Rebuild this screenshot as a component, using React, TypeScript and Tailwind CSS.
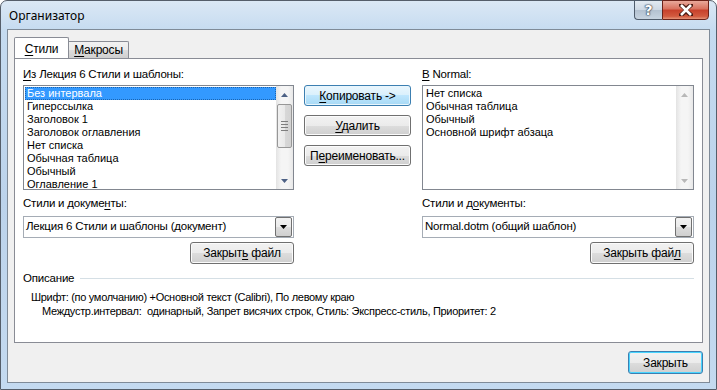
import React from "react";

const U = ({ children }: { children: React.ReactNode }) => (
  <span className="underline underline-offset-[2px] decoration-1">{children}</span>
);

const ui = "font-['Liberation_Sans',sans-serif] text-[11.5px] tracking-[-0.2px]";

function Btn({
  children,
  w,
  h = "h-[22px]",
  primary = false,
  hot = false,
}: {
  children: React.ReactNode;
  w: string;
  h?: string;
  primary?: boolean;
  hot?: boolean;
}) {
  const base = `${w} ${h} flex items-center justify-center rounded-[3px] border text-black leading-none text-[12px]`;
  if (hot)
    return (
      <div
        className={`${base} border-[#3c7fb1] bg-[linear-gradient(to_bottom,#eaf6fd_0%,#d9f0fc_50%,#bee6fd_50%,#a7d9f5_100%)] shadow-[inset_0_0_0_1px_#e8f6fd]`}
      >
        {children}
      </div>
    );
  return (
    <div
      className={`${base} ${
        primary ? "border-[#3c7fb1] shadow-[inset_0_0_0_1px_#48d5ff]" : "border-[#707070] shadow-[inset_0_0_0_1px_#fbfbfb]"
      } bg-[linear-gradient(to_bottom,#f2f2f2_0%,#ebebeb_50%,#dddddd_50%,#cfcfcf_100%)]`}
    >
      {children}
    </div>
  );
}

function Arrow({ up, disabled }: { up: boolean; disabled?: boolean }) {
  return (
    <svg width="7" height="4" viewBox="0 0 7 4">
      <path
        d={up ? "M0 4 L3.5 0 L7 4 Z" : "M0 0 L3.5 4 L7 0 Z"}
        fill={disabled ? "#b8b8b8" : "#4d6185"}
      />
    </svg>
  );
}

function ScrollBar({ disabled }: { disabled?: boolean }) {
  return (
    <div className="w-[17px] h-full flex flex-col bg-[linear-gradient(to_right,#e3e3e3,#f5f5f5_30%,#f5f5f5_70%,#e8e8e8)]">
      <div className="h-[17px] flex items-center justify-center">
        <Arrow up disabled={disabled} />
      </div>
      {disabled ? (
        <div className="flex-1" />
      ) : (
        <div className="flex-1 flex flex-col">
          <div className="h-[44px] mx-[1px] mt-[1px] rounded-[2px] border border-[#979797] bg-[linear-gradient(to_right,#f1f1f1,#e9e9e9_50%,#d8d8d8_50%,#d2d2d2)] flex flex-col items-center justify-center gap-[2px]">
            <div className="w-[7px] h-[1px] bg-[#7e7e7e]" />
            <div className="w-[7px] h-[1px] bg-[#7e7e7e]" />
            <div className="w-[7px] h-[1px] bg-[#7e7e7e]" />
            <div className="w-[7px] h-[1px] bg-[#7e7e7e]" />
          </div>
          <div className="flex-1" />
        </div>
      )}
      <div className="h-[17px] flex items-center justify-center">
        <Arrow up={false} disabled={disabled} />
      </div>
    </div>
  );
}

function ListBox({
  items,
  selected,
  disabledScroll,
}: {
  items: string[];
  selected?: number;
  disabledScroll?: boolean;
}) {
  return (
    <div className="h-[105px] border border-[#828790] bg-white flex">
      <div className="flex-1 pt-[1px] pl-[1px] overflow-hidden text-[11px] tracking-normal leading-[13px]">
        {items.map((t, i) => (
          <div
            key={t}
            className={`h-[13px] pl-[2px] whitespace-nowrap ${
              i === selected ? "bg-[#3399ff] text-white outline-1 outline-dotted outline-[#1b64b0] -outline-offset-1" : "text-black"
            }`}
          >
            {t}
          </div>
        ))}
      </div>
      <ScrollBar disabled={disabledScroll} />
    </div>
  );
}

function Combo({ text }: { text: string }) {
  return (
    <div className="h-[22px] border border-[#a5acb5] bg-white flex items-center">
      <div className="flex-1 pl-[2px] whitespace-nowrap">{text}</div>
      <div className="w-[17px] h-[20px] mr-[1px] border border-[#707070] rounded-[2px] bg-[linear-gradient(to_bottom,#f2f2f2,#ebebeb_50%,#dddddd_50%,#cfcfcf)] flex items-center justify-center">
        <svg width="7" height="4" viewBox="0 0 7 4">
          <path d="M0 0 L3.5 4 L7 0 Z" fill="#000" />
        </svg>
      </div>
    </div>
  );
}

export default function App() {
  return (
    <div className={`w-[717px] h-[390px] ${ui} text-black overflow-hidden`}>
      <div className="w-[717px] h-[390px] rounded-t-[7px] border border-[#555e6a] bg-[linear-gradient(to_bottom,#dbe8f5_0px,#c5dbf0_30px,#bcd3eb_200px,#c4daf0_390px)] flex flex-col">
        {/* Title bar */}
        <div className="h-[28px] flex items-start justify-between shrink-0">
          <div className="pl-[8px] pt-[6px] text-[12px] tracking-normal font-['Noto_Sans',sans-serif] text-black">Организатор</div>
          <div className="flex mr-[7px] -mt-[1px]">
            <div className="w-[28px] h-[20px] rounded-bl-[4px] border border-[#4f5c6c] border-r-0 bg-[linear-gradient(to_bottom,#e2eaf2,#cdd8e4_50%,#b3c1d0_50%,#c7d4e1)] flex items-center justify-center">
              <span className="text-white font-bold text-[14px] leading-none font-['DejaVu_Sans',sans-serif] [text-shadow:0_0_1px_#2b3a4c,0_0_1px_#2b3a4c,0_0_2px_#2b3a4c]">
                ?
              </span>
            </div>
            <div className="w-[47px] h-[20px] rounded-br-[4px] border border-[#6b2219] bg-[linear-gradient(to_bottom,#e9a99b,#d8705d_45%,#c7402b_50%,#d25a3f_85%,#e5957a)] flex items-center justify-center">
              <svg width="14" height="12" viewBox="0 0 14 12">
                <path
                  d="M2 1 L7 5 L12 1 M2 11 L7 7 L12 11"
                  stroke="#4a1a12"
                  strokeWidth="4.5"
                  fill="none"
                  strokeLinecap="square"
                />
                <path d="M2 1 L12 11 M12 1 L2 11" stroke="#fff" strokeWidth="2.6" fill="none" />
              </svg>
            </div>
          </div>
        </div>

        {/* Client area */}
        <div className="ml-[6px] mr-[6px] h-[354px] border border-[#7f8b98] bg-[#f0f0f0] flex flex-col pl-[6px] pr-[6px] pt-[8px]">
          {/* Tab strip */}
          <div className="flex items-end h-[20px] relative z-10 text-[12px]">
            <div className="w-[55px] h-[21px] border border-[#898c95] border-b-0 bg-white rounded-t-[2px] flex items-center justify-center pt-[1px]">
              <span>
                <U>С</U>тили
              </span>
            </div>
            <div className="w-[60px] h-[17px] border border-[#898c95] border-l-0 border-b-0 rounded-tr-[2px] bg-[linear-gradient(to_bottom,#f2f2f2,#ebebeb_50%,#dddddd_50%,#cfcfcf)] flex items-center justify-center">
              <span>
                <U>М</U>акросы
              </span>
            </div>
          </div>

          {/* Tab panel */}
          <div className="h-[285px] border border-[#898c95] bg-white flex flex-col pl-[8px] pr-[7px] pt-[8px]">
            <div className="flex">
              {/* Left column */}
              <div className="w-[271px] flex flex-col">
                <div className="h-[15px] leading-[15px] mb-[3px] whitespace-nowrap">
                  <U>И</U>з Лекция 6 Стили и шаблоны:
                </div>
                <ListBox
                  selected={0}
                  items={[
                    "Без интервала",
                    "Гиперссылка",
                    "Заголовок 1",
                    "Заголовок оглавления",
                    "Нет списка",
                    "Обычная таблица",
                    "Обычный",
                    "Оглавление 1",
                  ]}
                />
                <div className="h-[15px] leading-[15px] mt-[6px] mb-[5px] whitespace-nowrap">
                  Стили и докуме<U>н</U>ты:
                </div>
                <Combo text="Лекция 6 Стили и шаблоны (документ)" />
                <div className="flex justify-end mt-[4px]">
                  <Btn w="w-[104px]">
                    <span>
                      Закрыт<U>ь</U> файл
                    </span>
                  </Btn>
                </div>
              </div>

              {/* Middle buttons */}
              <div className="w-[107px] ml-[10px] pt-[18px] flex flex-col gap-[9px]">
                <Btn w="w-[107px]" h="h-[21px]" hot>
                  <span>
                    <U>К</U>опировать -&gt;
                  </span>
                </Btn>
                <Btn w="w-[107px]" h="h-[21px]">
                  <span>
                    <U>У</U>далить
                  </span>
                </Btn>
                <Btn w="w-[107px]" h="h-[21px]">
                  <span>
                    П<U>е</U>реименовать...
                  </span>
                </Btn>
              </div>

              {/* Right column */}
              <div className="w-[272px] ml-[11px] flex flex-col">
                <div className="h-[15px] leading-[15px] mb-[3px] whitespace-nowrap">
                  <U>В</U> Normal:
                </div>
                <ListBox
                  disabledScroll
                  items={["Нет списка", "Обычная таблица", "Обычный", "Основной шрифт абзаца"]}
                />
                <div className="h-[15px] leading-[15px] mt-[6px] mb-[5px] whitespace-nowrap">
                  Стили и д<U>о</U>кументы:
                </div>
                <Combo text="Normal.dotm (общий шаблон)" />
                <div className="flex justify-end mt-[4px]">
                  <Btn w="w-[104px]">
                    <span>
                      Закрыть фай<U>л</U>
                    </span>
                  </Btn>
                </div>
              </div>
            </div>

            {/* Description */}
            <div className="mt-[7px] flex items-center gap-[6px]">
              <span className="leading-[15px]">Описание</span>
              <div className="flex-1 h-[1px] bg-[#d5dfe5] mr-[1px]" />
            </div>
            <div className="pl-[8px] mt-[4px] leading-[14px] whitespace-nowrap text-[11px] tracking-[-0.3px]">
              Шрифт: (по умолчанию) +Основной текст (Calibri), По левому краю
            </div>
            <div className="pl-[19px] leading-[14px] whitespace-nowrap text-[11px] tracking-[-0.3px]">
              Междустр.интервал:&nbsp; одинарный, Запрет висячих строк, Стиль: Экспресс-стиль, Приоритет: 2
            </div>
          </div>

          {/* Bottom button */}
          <div className="flex justify-end mt-[8px]">
            <Btn w="w-[75px]" h="h-[23px]" primary>
              <span>Закрыть</span>
            </Btn>
          </div>
        </div>
      </div>
    </div>
  );
}
